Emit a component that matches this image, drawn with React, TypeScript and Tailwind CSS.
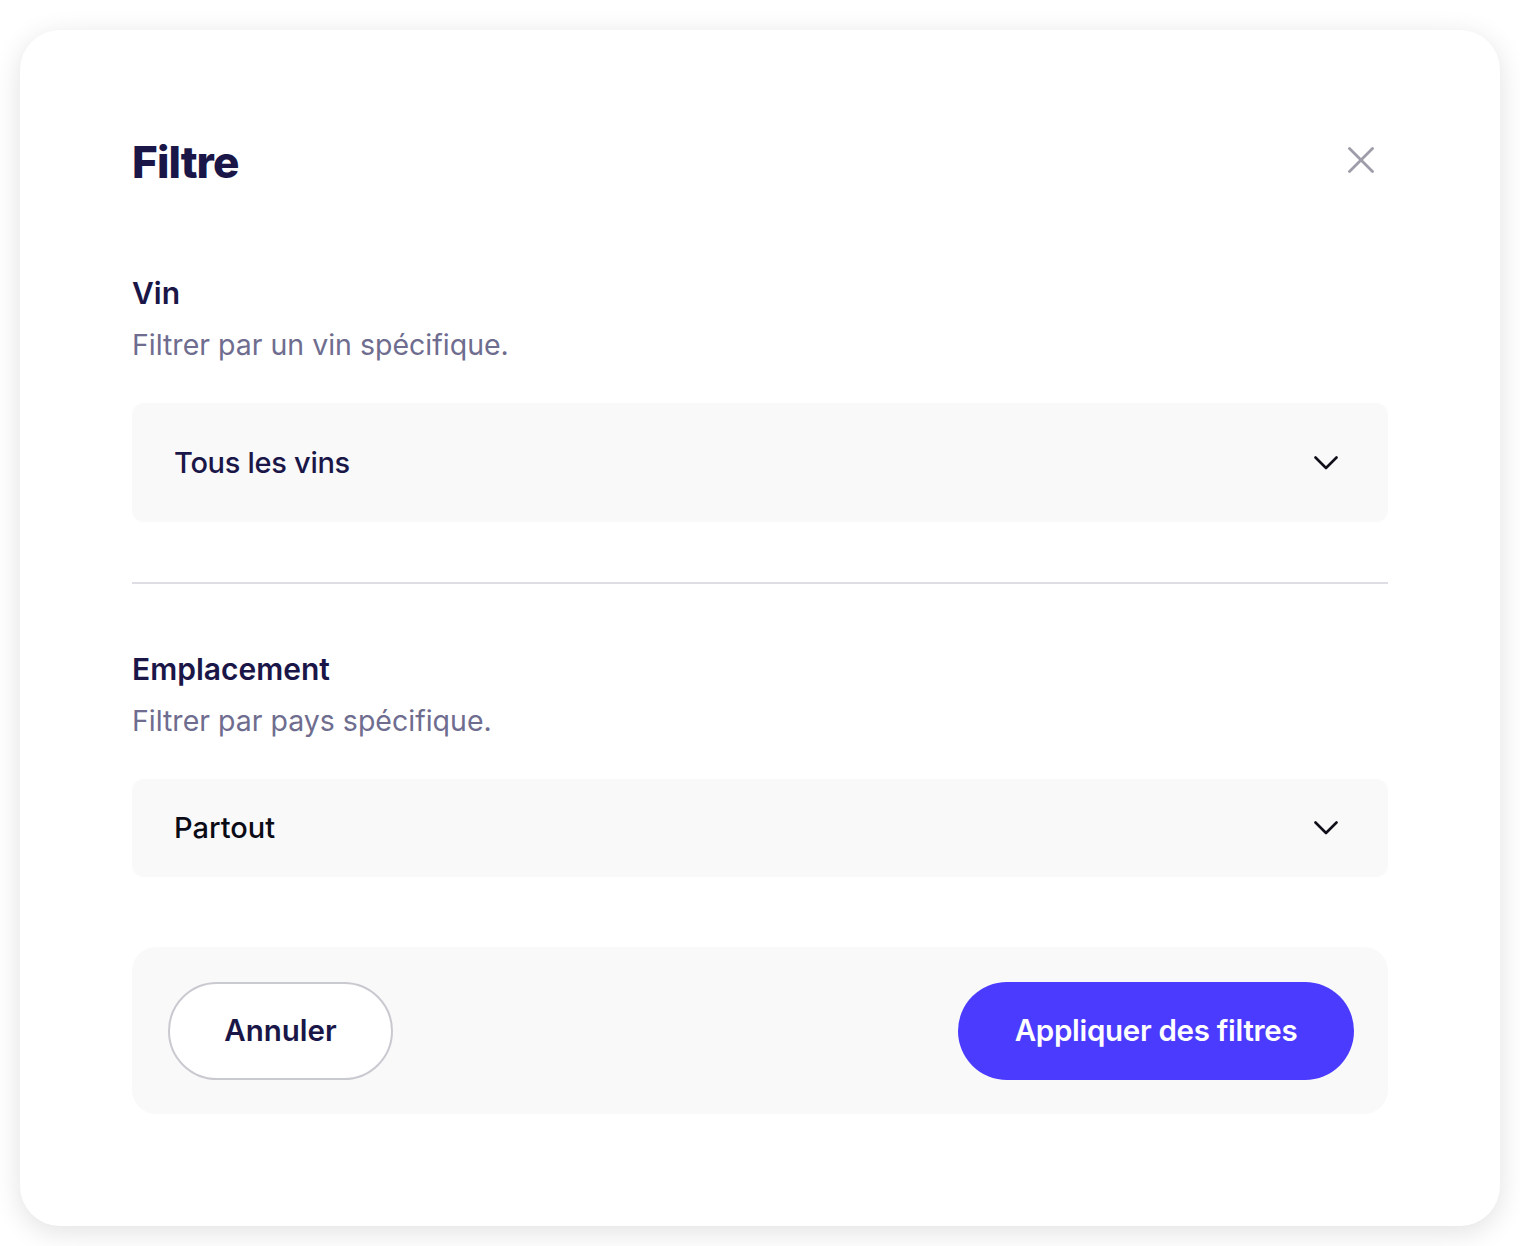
function Chevron() {
  return (
    <svg width="24" height="14" viewBox="0 0 24 14" fill="none" className="shrink-0">
      <polyline points="1.5,1.5 12,12 22.5,1.5" stroke="#0f0f1a" strokeWidth="2.6" strokeLinecap="round" strokeLinejoin="round" />
    </svg>
  )
}

function CloseIcon() {
  return (
    <svg width="26" height="26" viewBox="0 0 26 26" fill="none">
      <path d="M1.5 1.5 24.5 24.5M24.5 1.5 1.5 24.5" stroke="#9d9ca9" strokeWidth="2.8" strokeLinecap="round" />
    </svg>
  )
}

interface SelectProps {
  value: string
  height: string
  dark?: boolean
}

function SelectBox({ value, height, dark }: SelectProps) {
  return (
    <button
      type="button"
      className={`flex w-full items-center justify-between rounded-xl bg-[#f9f9f9] pl-[42px] pr-[50px] ${height}`}
    >
      <span className={`text-[29px] font-medium ${dark ? 'text-[#0b0b16]' : 'tracking-[-0.01em] text-[#1a1648]'}`}>
        {value}
      </span>
      <Chevron />
    </button>
  )
}

interface SectionProps {
  label: string
  hint: string
}

function SectionHead({ label, hint }: SectionProps) {
  return (
    <div className="flex flex-col">
      <h3 className="text-[30px] leading-[36px] font-semibold text-[#1a1648]">{label}</h3>
      <p className="mt-4 text-[28.5px] leading-[36px] font-normal text-[#6f6d8f]">{hint}</p>
    </div>
  )
}

export default function App() {
  return (
    <div className="min-h-[1246px] bg-white pt-[30px] px-5 pb-5" style={{ fontFamily: 'Inter, "Noto Sans", sans-serif' }}>
      <div className="flex h-[1196px] flex-col rounded-[40px] bg-white px-[112px] pt-[108px] shadow-[0_6px_28px_rgba(0,0,0,0.12)]">
        {/* Header */}
        <div className="flex items-center justify-between">
          <h2 className="text-[44px] leading-[48px] font-extrabold tracking-[-0.02em] text-[#1a1648]">Filtre</h2>
          <button type="button" className="mr-[14px] -mt-1">
            <CloseIcon />
          </button>
        </div>

        {/* Vin */}
        <div className="mt-[89px]">
          <SectionHead label="Vin" hint="Filtrer par un vin spécifique." />
        </div>
        <div className="mt-10">
          <SelectBox value="Tous les vins" height="h-[119px]" />
        </div>

        <div className="mt-[60px] h-[2px] bg-[#dddde3]" />

        {/* Emplacement */}
        <div className="mt-[67px]">
          <SectionHead label="Emplacement" hint="Filtrer par pays spécifique." />
        </div>
        <div className="mt-10">
          <SelectBox value="Partout" height="h-[98px]" dark />
        </div>

        {/* Footer */}
        <div className="mt-[70px] flex h-[167px] items-center justify-between rounded-3xl bg-[#f9f9f9] pl-9 pr-[34px]">
          <button
            type="button"
            className="h-[98px] w-[225px] rounded-full border-2 border-[#c9c9d0] bg-white text-[29.5px] font-semibold text-[#1a1648]"
          >
            Annuler
          </button>
          <button
            type="button"
            className="h-[98px] w-[396px] rounded-full bg-[#4b3bff] text-[29.5px] font-semibold tracking-[-0.01em] text-white"
          >
            Appliquer des filtres
          </button>
        </div>
      </div>
    </div>
  )
}
